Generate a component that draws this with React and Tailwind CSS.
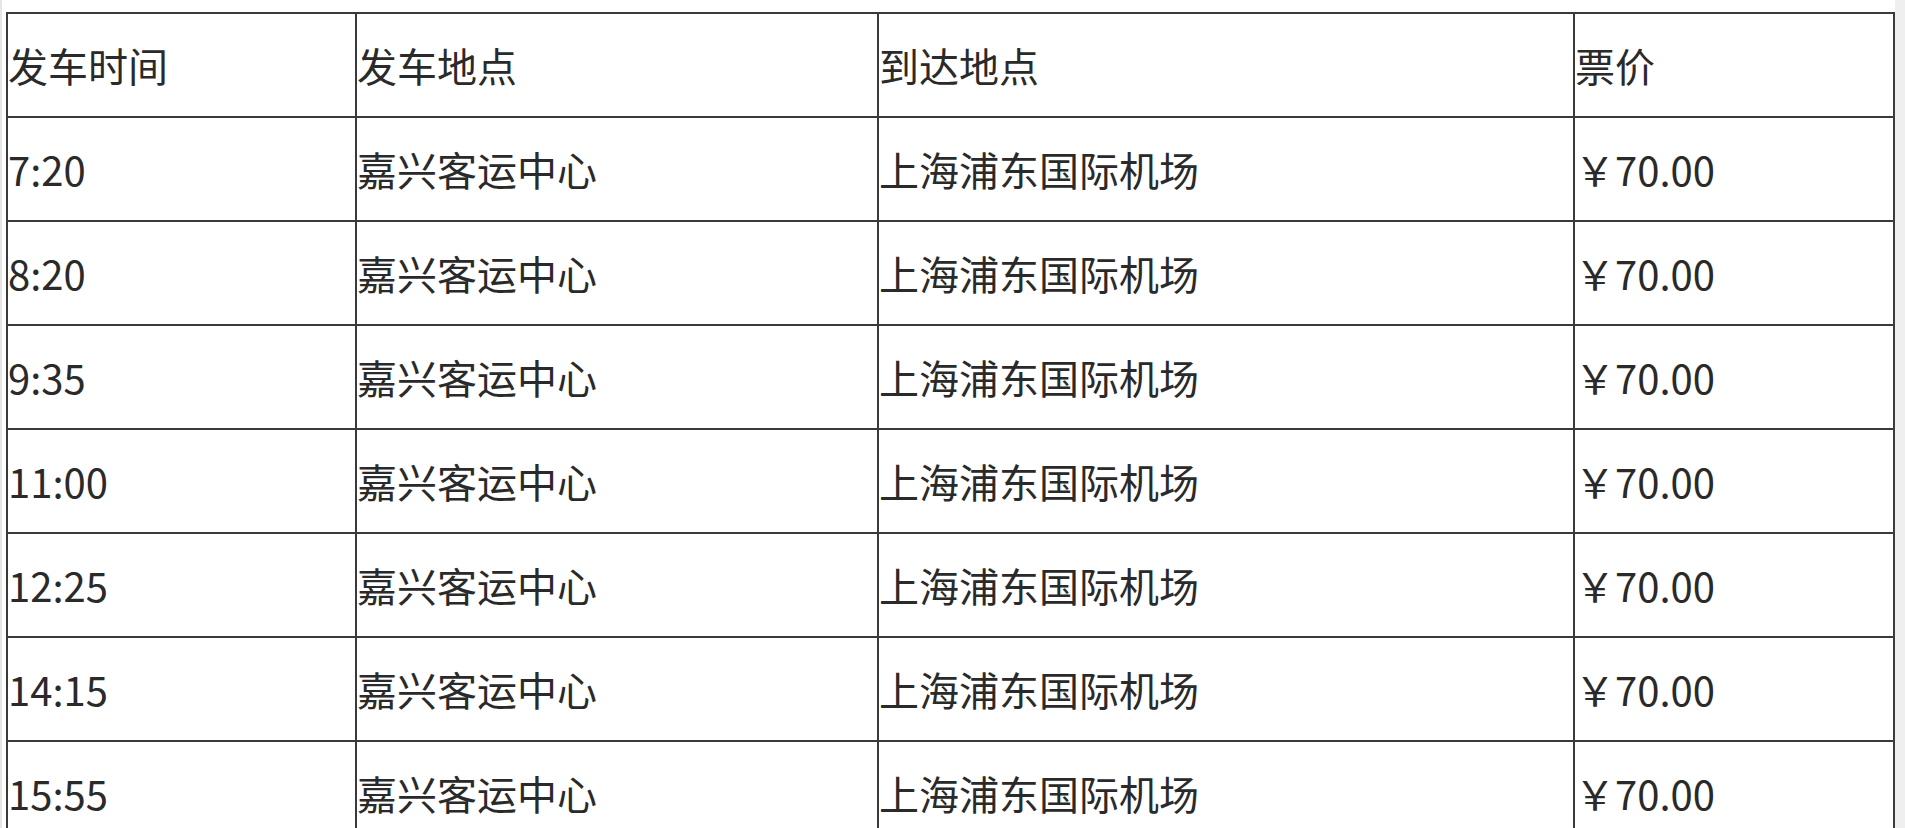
import React from 'react';

const rows = ['7:20', '8:20', '9:35', '11:00', '12:25', '14:15', '15:55'];

export default function App() {
  return (
    <div className="flex h-[828px] overflow-hidden bg-white" style={{ fontFamily: '"Noto Sans CJK SC", "Noto Sans", sans-serif' }}>
      <div className="w-[2px] bg-[#e6e6e6]" />
      <div className="flex-1 pt-[12px] pl-[4px]">
        <table className="border-collapse text-[40px] leading-none text-[#2a2a2a] w-[1887px] table-fixed">
          <colgroup>
            <col className="w-[349px]" />
            <col className="w-[522px]" />
            <col className="w-[696px]" />
            <col className="w-[320px]" />
          </colgroup>
          <thead>
            <tr className="h-[104px]">
              <th className="border-2 border-[#3a3a3a] text-left font-normal pl-0">发车时间</th>
              <th className="border-2 border-[#3a3a3a] text-left font-normal pl-0">发车地点</th>
              <th className="border-2 border-[#3a3a3a] text-left font-normal pl-0">到达地点</th>
              <th className="border-2 border-[#3a3a3a] text-left font-normal pl-0">票价</th>
            </tr>
          </thead>
          <tbody>
            {rows.map((t) => (
              <tr key={t} className="h-[104px]">
                <td className="border-2 border-[#3a3a3a] pl-0">{t}</td>
                <td className="border-2 border-[#3a3a3a] pl-0">嘉兴客运中心</td>
                <td className="border-2 border-[#3a3a3a] pl-0">上海浦东国际机场</td>
                <td className="border-2 border-[#3a3a3a] pl-0">￥70.00</td>
              </tr>
            ))}
          </tbody>
        </table>
      </div>
      <div className="w-[10px] bg-[#efefef]" />
    </div>
  );
}
